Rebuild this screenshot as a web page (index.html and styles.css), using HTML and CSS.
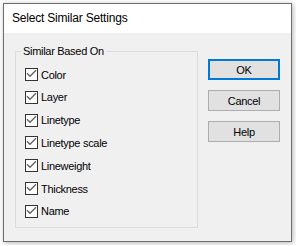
FILE: index.html
```html
<!DOCTYPE html>
<html lang="en">
<head>
    <meta charset="UTF-8">
    <title>Select Similar Settings</title>
    <link rel="stylesheet" href="styles.css">
</head>
<body>
    <div class="dialog">
        <div class="titlebar">Select Similar Settings</div>

        <div class="dialog-body">
            <fieldset class="group">
                <legend>Similar Based On</legend>
                <label class="check-row"><span class="check-box"><svg viewBox="0 0 11 11"><path d="M1 4.2 L4 7.3 L10 1.3"/></svg></span>Color</label>
                <label class="check-row"><span class="check-box"><svg viewBox="0 0 11 11"><path d="M1 4.2 L4 7.3 L10 1.3"/></svg></span>Layer</label>
                <label class="check-row"><span class="check-box"><svg viewBox="0 0 11 11"><path d="M1 4.2 L4 7.3 L10 1.3"/></svg></span>Linetype</label>
                <label class="check-row"><span class="check-box"><svg viewBox="0 0 11 11"><path d="M1 4.2 L4 7.3 L10 1.3"/></svg></span>Linetype scale</label>
                <label class="check-row"><span class="check-box"><svg viewBox="0 0 11 11"><path d="M1 4.2 L4 7.3 L10 1.3"/></svg></span>Lineweight</label>
                <label class="check-row"><span class="check-box"><svg viewBox="0 0 11 11"><path d="M1 4.2 L4 7.3 L10 1.3"/></svg></span>Thickness</label>
                <label class="check-row"><span class="check-box"><svg viewBox="0 0 11 11"><path d="M1 4.2 L4 7.3 L10 1.3"/></svg></span>Name</label>
            </fieldset>

            <div class="buttons">
                <button class="btn btn-default">OK</button>
                <button class="btn">Cancel</button>
                <button class="btn">Help</button>
            </div>
        </div>
    </div>
</body>
</html>
```

FILE: styles.css
```css
body {
    margin: 0;
    padding: 3px;
    background-color: #ffffff;
    font-family: 'Liberation Sans', Arial, sans-serif;
    font-size: 11px;
    letter-spacing: -0.3px;
    color: #000;
}
.dialog {
    box-sizing: border-box;
    width: 289px;
    height: 239px;
    border: 1px solid #6e6e6e;
    background-color: #f0f0f0;
    box-shadow: 1px 1px 5px rgba(0, 0, 0, 0.3);
}
.titlebar {
    height: 29px;
    line-height: 29px;
    padding-left: 8px;
    background-color: #fff;
    font-size: 12px;
    letter-spacing: -0.2px;
}
.dialog-body {
    display: flex;
    align-items: flex-start;
    padding: 11px 11px 0 11px;
}
.group {
    box-sizing: border-box;
    width: 183px;
    height: 184px;
    margin: 0;
    padding: 10px 0 0 9px;
    border: 1px solid #dcdcdc;
}
.group legend {
    padding: 0 2px;
    margin-left: -4px;
    line-height: 14px;
}
.check-row {
    display: flex;
    align-items: center;
    height: 13px;
    margin-bottom: 9.83px;
}
.check-box {
    box-sizing: border-box;
    width: 13px;
    height: 13px;
    margin-right: 3px;
    border: 1px solid #333;
    background-color: #fff;
}
.check-box svg {
    display: block;
    width: 11px;
    height: 11px;
}
.check-box path {
    fill: none;
    stroke: #606060;
    stroke-width: 1.3;
}
.buttons {
    display: flex;
    flex-direction: column;
    gap: 10px;
    margin-left: 10px;
    margin-top: 15px;
}
.btn {
    box-sizing: border-box;
    width: 72px;
    height: 21px;
    padding: 0;
    border: 1px solid #adadad;
    background-color: #e1e1e1;
    font-family: 'Liberation Sans', Arial, sans-serif;
    font-size: 11px;
    letter-spacing: -0.3px;
    color: #000;
}
.btn-default {
    border: 2px solid #0078d7;
}
```
